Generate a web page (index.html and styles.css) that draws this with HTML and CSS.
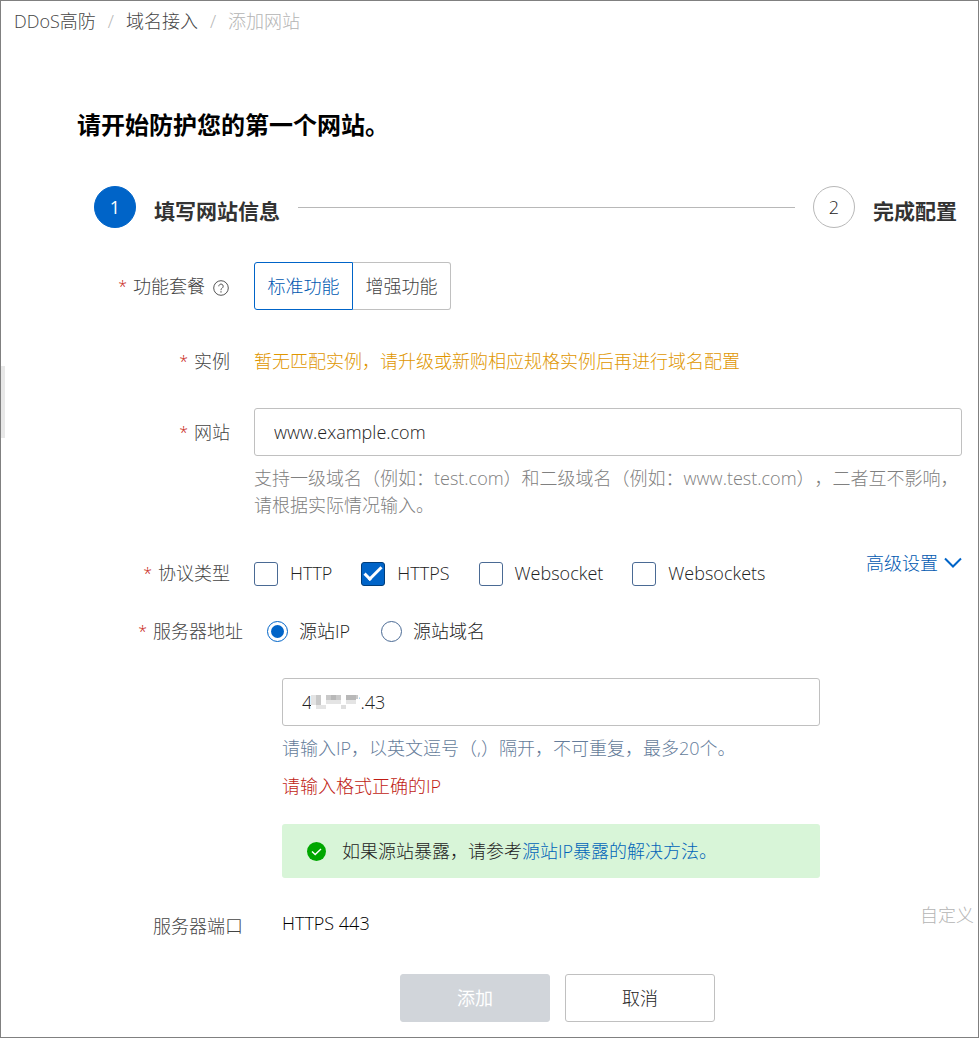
FILE: index.html
```
<!DOCTYPE html>
<html lang="zh-CN">
<head>
  <meta charset="UTF-8">
  <title>添加网站</title>
  <link rel="stylesheet" href="styles.css">
</head>
<body>
  <div class="side-handle"></div>

  <nav class="breadcrumb">
    <a href="#">DDoS高防</a>
    <span class="sep">/</span>
    <a href="#">域名接入</a>
    <span class="sep">/</span>
    <span class="current">添加网站</span>
  </nav>

  <h1>请开始防护您的第一个网站。</h1>

  <div class="steps">
    <span class="step-num active">1</span>
    <span class="step-title">填写网站信息</span>
    <span class="step-line"></span>
    <span class="step-num">2</span>
    <span class="step-title">完成配置</span>
  </div>

  <form>
    <div class="row row-package">
      <div class="label"><span class="star">*</span>功能套餐
        <svg class="help-icon" width="16" height="16" viewBox="0 0 16 16" fill="none" stroke="#555" stroke-width="1">
          <circle cx="8" cy="8" r="7.3"/>
          <path d="M5.8 6.3a2.2 2.2 0 1 1 3.4 1.8c-.8.5-1.2.9-1.2 1.7v.4"/>
          <path d="M8 11.2v1.3" stroke-width="1.2"/>
        </svg>
      </div>
      <div class="segment">
        <button type="button" class="selected">标准功能</button>
        <button type="button">增强功能</button>
      </div>
    </div>

    <div class="row row-instance">
      <div class="label"><span class="star">*</span>实例</div>
      <div class="warning">暂无匹配实例，请升级或新购相应规格实例后再进行域名配置</div>
    </div>

    <div class="row row-site">
      <label class="label" for="site"><span class="star">*</span>网站</label>
      <div>
        <input type="text" id="site" value="www.example.com">
        <p class="help">支持一级域名（例如：test.com）和二级域名（例如：www.test.com），二者互不影响，请根据实际情况输入。</p>
      </div>
    </div>

    <div class="row row-protocol">
      <div class="label"><span class="star">*</span>协议类型</div>
      <div class="protocol">
        <div class="options">
          <label><input type="checkbox">HTTP</label>
          <label><input type="checkbox" checked>HTTPS</label>
          <label><input type="checkbox">Websocket</label>
          <label><input type="checkbox">Websockets</label>
        </div>
        <a class="advanced" href="#">高级设置
          <svg width="18" height="12" viewBox="0 0 18 12" fill="none" stroke="#0064c8" stroke-width="2">
            <path d="M1 1.5l8 8 8-8"/>
          </svg>
        </a>
      </div>
    </div>

    <div class="row wide row-address">
      <div class="label"><span class="star">*</span>服务器地址</div>
      <div>
        <div class="options radios">
          <label><input type="radio" name="origin" checked>源站IP</label>
          <label><input type="radio" name="origin">源站域名</label>
        </div>
        <div class="origin">
          <div class="ip-box">
            <input type="text" aria-label="源站IP" value="4*.**.*.43">
            <svg class="mosaic" width="48" height="18" viewBox="0 0 48 18" shape-rendering="crispEdges">
              <rect width="48" height="18" fill="#fff"/>
              <path fill="#e4e4e4" d="M0 2h5v5H0zM0 7h5v5H0zM10 12h5v4h-5zM15 7h15v4H15zM35 7h10v4H35zM5 12h5v4H5z"/>
              <path fill="#c9c9c9" d="M5 2h5v10H5zM15 2h5v5h-5zM25 2h5v5h-5zM45 2h2v4h-2z"/>
              <path fill="#b8b8b8" d="M20 2h5v5h-5zM35 2h5v5h-5zM40 2h5v5h-5z"/>
              <path fill="#dedede" d="M30 12h5v4h-5z"/>
            </svg>
          </div>
          <p class="hint">请输入IP，以英文逗号（,）隔开，不可重复，最多20个。</p>
          <p class="error">请输入格式正确的IP</p>
          <div class="notice">
            <svg width="19" height="19" viewBox="0 0 19 19">
              <circle cx="9.5" cy="9.5" r="9.5" fill="#00a700"/>
              <path d="M5 9.5l3.2 3.1L14 6.9" fill="none" stroke="#fff" stroke-width="1.4"/>
            </svg>
            <p>如果源站暴露，请参考<a href="#">源站IP暴露的解决方法。</a></p>
          </div>
        </div>
      </div>
    </div>

    <div class="row wide row-port">
      <div class="label">服务器端口</div>
      <div class="port">
        <span>HTTPS 443</span>
        <a class="custom" href="#">自定义</a>
      </div>
    </div>

    <div class="actions">
      <button type="submit" disabled>添加</button>
      <button type="button">取消</button>
    </div>
  </form>
</body>
</html>
```

FILE: styles.css
```
* {
  box-sizing: border-box;
}

body {
  position: relative;
  margin: 0;
  min-height: 100vh;
  border: 1px solid #808080;
  background: #fff;
  color: #222;
  font-family: "Open Sans", "Noto Sans CJK SC", sans-serif;
  font-size: 18px;
  font-weight: 300;
  line-height: 27px;
  text-spacing-trim: space-all;
}

p,
h1 {
  margin: 0;
}

a {
  color: #0064b8;
  text-decoration: none;
}

button,
input {
  font: inherit;
  color: inherit;
}

.side-handle {
  position: absolute;
  top: 365px;
  left: 0;
  width: 4px;
  height: 72px;
  background: #e8e8e8;
}

.breadcrumb {
  display: flex;
  gap: 12px;
  padding: 7px 13px 0;
}

.breadcrumb a {
  color: #444;
}

.breadcrumb .sep,
.breadcrumb .current {
  color: #b4b4b4;
}

h1 {
  margin: 72px 0 0 76px;
  font-size: 24px;
  line-height: 36px;
  color: #000;
}

.steps {
  display: flex;
  align-items: center;
  gap: 18px;
  margin: 43px 21px 0 93px;
}

.step-num {
  flex: none;
  width: 42px;
  height: 42px;
  border: 1px solid #b8b8b8;
  border-radius: 50%;
  line-height: 40px;
  text-align: center;
}

.step-num.active {
  border-color: #0064c8;
  background: #0064c8;
  color: #fff;
  font-weight: 400;
}

.step-title {
  padding-top: 8px;
  color: #333;
  font-size: 21px;
  font-weight: bold;
}

.step-line {
  flex: 1;
  height: 1px;
  background: #b8b8b8;
}

form {
  margin-top: 34px;
}

.row {
  display: grid;
  grid-template-columns: 229px 1fr;
  column-gap: 24px;
  padding-right: 16px;
}

.row.wide {
  grid-template-columns: 242px 1fr;
  padding-right: 4px;
}

.label {
  display: flex;
  justify-content: flex-end;
  color: #444;
}

.star {
  margin-right: 6px;
  color: #c81e14;
  font-size: 16px;
}

.help-icon {
  margin: 7px 1px 0 8px;
}

.row-package {
  align-items: center;
}

.segment {
  display: flex;
}

.segment button {
  width: 98px;
  height: 48px;
  padding: 0;
  border: 1px solid #c0c0c0;
  border-left: 0;
  border-radius: 0 3px 3px 0;
  background: #fff;
  color: #444;
}

.segment .selected {
  width: 99px;
  border: 1px solid #0064c8;
  border-radius: 3px 0 0 3px;
  color: #0058b0;
}

.row-instance {
  margin-top: 38px;
}

.warning {
  color: #e09600;
}

.row-site {
  margin-top: 33px;
}

.row-site .label {
  padding-top: 11px;
}

input[type="text"] {
  display: block;
  width: 100%;
  height: 48px;
  padding: 0 19px;
  border: 1px solid #c0c0c0;
  border-radius: 3px;
  background: #fff;
}

.help {
  margin-top: 9px;
  color: #808080;
}

.row-protocol {
  margin-top: 41px;
}

.protocol,
.port {
  display: flex;
  justify-content: space-between;
}

.options {
  display: flex;
  gap: 29px;
}

.options label {
  display: flex;
  align-items: center;
  gap: 12px;
}

.options input {
  display: grid;
  place-items: center;
  appearance: none;
  width: 24px;
  height: 24px;
  margin: 0;
  border: 1px solid #4a6a94;
  border-radius: 3px;
  background: #fff;
}

.options input[type="checkbox"]:checked {
  border-color: #003d7a;
  background: #0064c8;
}

.options input[type="checkbox"]:checked::before {
  content: "";
  box-sizing: border-box;
  width: 18px;
  height: 9px;
  margin-bottom: 5px;
  border: solid #fff;
  border-width: 0 0 3px 3px;
  transform: rotate(-45deg);
}

.options.radios {
  gap: 31px;
}

.radios label {
  gap: 11px;
}

.radios input {
  width: 21px;
  height: 21px;
  border-radius: 50%;
}

.radios input:checked {
  border-color: #0064c8;
}

.radios input:checked::before {
  content: "";
  width: 13px;
  height: 13px;
  border-radius: 50%;
  background: #0064c8;
}

.advanced {
  display: flex;
  align-items: center;
  gap: 6px;
  margin-top: -21px;
  color: #0058b0;
}

.row-address {
  margin-top: 31px;
}

.origin {
  max-width: 553px;
  padding-left: 15px;
}

.ip-box {
  position: relative;
  margin-top: 33px;
}

.mosaic {
  position: absolute;
  top: 15px;
  left: 29px;
}

.hint {
  margin-top: 9px;
  color: #647c9a;
}

.error {
  margin-top: 11px;
  color: #c01c14;
}

.notice {
  display: flex;
  align-items: center;
  gap: 16px;
  margin-top: 24px;
  padding: 14px 25px 13px;
  border-radius: 3px;
  background: #d8f5d8;
}

.row-port {
  margin-top: 32px;
}

.row-port .label {
  padding-top: 3px;
}

.port {
  padding-left: 15px;
  color: #000;
}

.port .custom {
  margin-top: -8px;
  color: #b4b4b4;
}

.actions {
  display: flex;
  gap: 15px;
  margin: 34px 0 15px 399px;
}

.actions button {
  width: 150px;
  height: 48px;
  border: 1px solid #c0c0c0;
  border-radius: 3px;
  background: #fff;
}

.actions button:disabled {
  border-color: #d1d5da;
  background: #d1d5da;
  color: #fff;
  font-weight: 400;
}
```
